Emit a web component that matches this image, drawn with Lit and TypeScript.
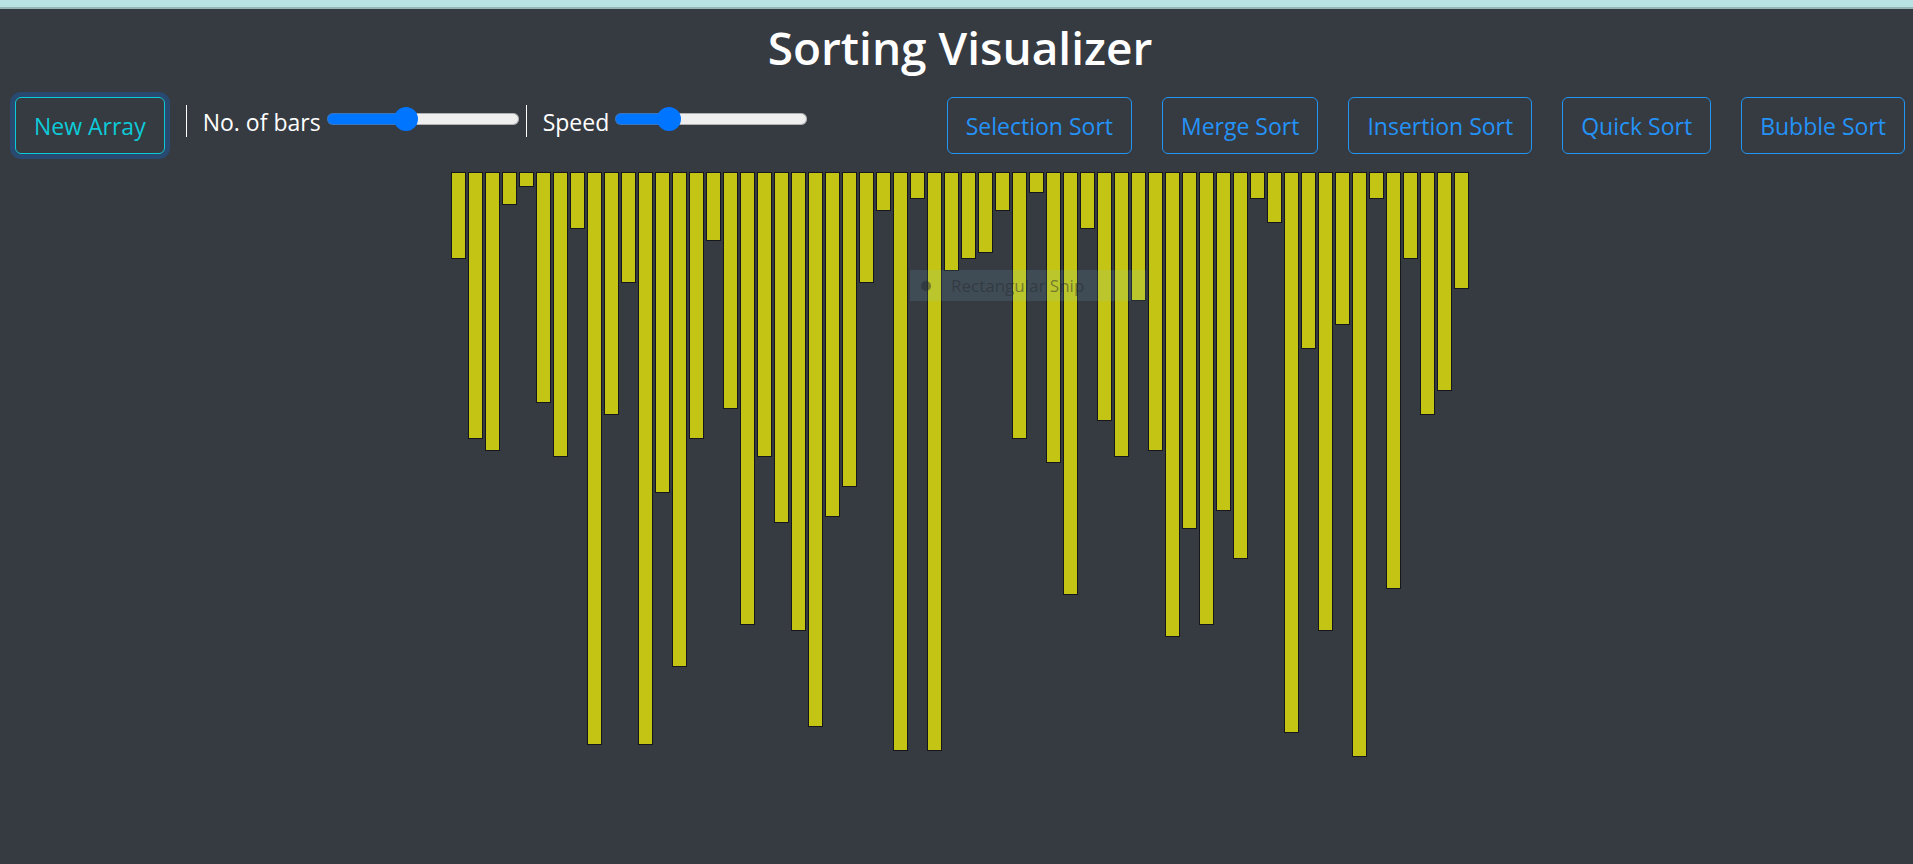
import { LitElement, html, css } from "lit";
import { customElement, property, state } from "lit/decorators.js";

const INITIAL = [
  14, 44, 46, 5, 2, 38, 47, 9, 95, 40, 18, 95, 53, 82, 44, 11, 39, 75, 47, 58,
  76, 92, 57, 52, 18, 6, 96, 4, 96, 16, 14, 13, 6, 44, 3, 48, 70, 9, 41, 47,
  21, 46, 77, 59, 75, 56, 64, 4, 8, 93, 29, 76, 25, 97, 4, 69, 14, 40, 36, 19,
];

const SORTS = ["Selection Sort", "Merge Sort", "Insertion Sort", "Quick Sort", "Bubble Sort"];

@customElement("range-control")
class RangeControl extends LitElement {
  @property() label = "";
  @property({ type: Number }) min = 0;
  @property({ type: Number }) max = 100;
  @property({ type: Number }) value = 50;

  static styles = css`
    :host {
      display: flex;
      align-items: flex-start;
      border-left: 1px solid #fff;
      height: 32px;
      padding-left: 16px;
    }
    .label {
      color: #fff;
      line-height: 34px;
      margin-right: 6px;
      white-space: nowrap;
    }
    .range {
      appearance: none;
      background: none;
      width: 192px;
      height: 24px;
      margin: 2px 0 0;
      cursor: pointer;
    }
    .range:focus {
      outline: none;
    }
    .range::-webkit-slider-runnable-track {
      box-sizing: border-box;
      height: 12px;
      border-radius: 6px;
      background: linear-gradient(to right, #0075ff var(--fill), #efefef var(--fill));
      box-shadow: inset 0 0 0 1px rgba(118, 118, 118, 0.5);
    }
    .range::-webkit-slider-thumb {
      appearance: none;
      width: 24px;
      height: 24px;
      margin-top: -6px;
      border-radius: 50%;
      background: #0075ff;
    }
  `;

  private onInput(e: Event) {
    this.value = Number((e.target as HTMLInputElement).value);
    this.dispatchEvent(new CustomEvent("changed", { detail: this.value }));
  }

  render() {
    const fill = ((this.value - this.min) / (this.max - this.min)) * 100;
    return html`
      <label class="label" for="range">${this.label}</label>
      <input
        class="range"
        id="range"
        type="range"
        min=${this.min}
        max=${this.max}
        .value=${String(this.value)}
        style="--fill: ${fill}%"
        @input=${this.onInput}
      />
    `;
  }
}

@customElement("app-root")
class AppRoot extends LitElement {
  @state() private values = INITIAL;

  static styles = css`
    :host {
      display: block;
      box-sizing: border-box;
      min-height: 100vh;
      background: #363a41;
      border-top: 7px solid #b9e2e5;
      font-family: "Segoe UI", "Open Sans", "Noto Sans", sans-serif;
      font-size: 23px;
      color: #fff;
    }
    .page {
      border-top: 2px solid #96b5b6;
      padding: 0 8px 0 15px;
    }
    .title {
      margin: 0;
      padding-top: 8px;
      font-size: 46px;
      line-height: 60px;
      font-weight: 600;
      text-align: center;
    }
    .toolbar {
      display: flex;
      justify-content: space-between;
      align-items: flex-start;
      flex-wrap: wrap;
      padding-top: 20px;
    }
    .group {
      display: flex;
      align-items: flex-start;
    }
    .ranges {
      display: flex;
      gap: 7px;
      padding: 8px 0 0 21px;
    }
    .sorts {
      display: flex;
      gap: 30px;
    }
    .btn {
      font: inherit;
      line-height: 37px;
      padding: 10px 18px 8px;
      border: 1px solid #2196f3;
      border-radius: 6px;
      background: none;
      color: #2493f8;
      white-space: nowrap;
      cursor: pointer;
    }
    .btn.fresh {
      border-color: #0dcad8;
      color: #0dcad8;
      box-shadow: 0 0 0 5px rgba(0, 123, 255, 0.25);
    }
    .chart {
      position: relative;
      display: flex;
      justify-content: center;
      align-items: flex-start;
      gap: 2px;
      margin-top: 18px;
    }
    .bar {
      box-sizing: border-box;
      width: 15px;
      background: #c3c413;
      border: 1px solid #15171a;
    }
    .snip {
      position: absolute;
      top: 98px;
      left: calc(50% - 50px);
      display: flex;
      align-items: center;
      width: 236px;
      height: 31px;
      box-sizing: border-box;
      padding-left: 11px;
      gap: 20px;
      background: rgba(130, 210, 240, 0.12);
      color: rgba(40, 42, 46, 0.5);
      font-size: 17px;
      white-space: nowrap;
      pointer-events: none;
    }
    .dot {
      width: 10px;
      height: 10px;
      border-radius: 50%;
      background: rgba(40, 42, 46, 0.5);
    }
  `;

  private shuffle(count: number) {
    this.values = Array.from({ length: count }, () => 1 + Math.floor(Math.random() * 99));
  }

  private sort() {
    this.values = [...this.values].sort((a, b) => a - b);
  }

  render() {
    return html`
      <main class="page">
        <h1 class="title">Sorting Visualizer</h1>
        <nav class="toolbar">
          <div class="group">
            <button class="btn fresh" @click=${() => this.shuffle(this.values.length)}>New Array</button>
            <div class="ranges">
              <range-control
                label="No. of bars"
                .min=${20}
                .max=${120}
                .value=${60}
                @changed=${(e: CustomEvent) => this.shuffle(e.detail)}
              ></range-control>
              <range-control label="Speed" .min=${20} .max=${300} .value=${90}></range-control>
            </div>
          </div>
          <div class="sorts">
            ${SORTS.map((name) => html`<button class="btn" @click=${this.sort}>${name}</button>`)}
          </div>
        </nav>
        <section class="chart">
          ${this.values.map((v) => html`<div class="bar" style="height: ${v * 6 + 3}px"></div>`)}
          <div class="snip"><span class="dot"></span>Rectangular Snip</div>
        </section>
      </main>
    `;
  }
}
